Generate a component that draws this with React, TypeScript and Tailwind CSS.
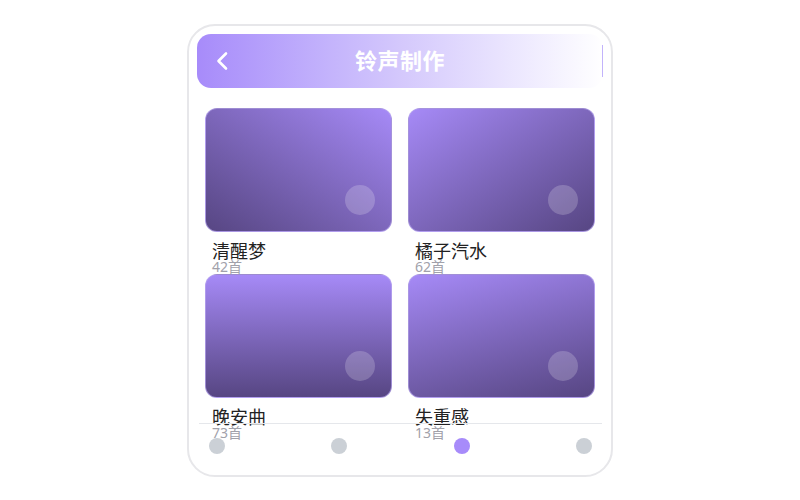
import React from 'react';

const albums = [
  { name: '清醒梦', count: 42, bg: 'bg-linear-to-tr from-[#574683] to-[#a68af7]' },
  { name: '橘子汽水', count: 62, bg: 'bg-linear-to-br from-[#a68af7] to-[#574683]' },
  { name: '晚安曲', count: 73, bg: 'bg-linear-to-b from-[#a68af7] to-[#574683]' },
  { name: '失重感', count: 13, bg: 'bg-linear-165 from-[#a68af7] to-[#574683]' },
];

export default function App() {
  return (
    <main
      className="w-[800px] h-[500px] bg-white flex items-center justify-center"
      style={{ fontFamily: '"Noto Sans", "Noto Sans CJK SC", sans-serif' }}
    >
      <div className="relative w-[426px] h-[453px] rounded-[28px] border-2 border-[#e7e7ea] bg-white overflow-hidden">
        {/* Header */}
        <header className="relative mx-2 mt-2 h-[54px] rounded-[14px] bg-gradient-to-r from-[#a78bfa] via-[#d4c8fc] to-white flex items-center justify-between pl-[18px]">
          <svg width="14" height="20" viewBox="0 0 14 20" fill="none" className="text-white">
            <polyline points="11,2.5 3.5,10 11,17.5" stroke="currentColor" strokeWidth="2.6" strokeLinecap="round" strokeLinejoin="round" />
          </svg>
          <h1 className="absolute inset-0 flex items-center justify-center text-[22px] font-bold text-white tracking-[0.5px]">
            铃声制作
          </h1>
          <div className="w-px h-8 bg-[#c2b3fb]" />
        </header>

        {/* Album grid */}
        <div className="grid grid-cols-2 gap-x-4 px-4 mt-5">
          {albums.map((a) => (
            <div key={a.name} className="flex flex-col">
              <div className={`relative h-[124px] rounded-[12px] border border-[#b9a8f0]/70 ${a.bg}`}>
                <div className="absolute right-4 bottom-4 w-[30px] h-[30px] rounded-full bg-white/20" />
              </div>
              <div className="mt-[10px] pl-[7px] text-[18px] leading-[18px] text-[#222]">{a.name}</div>
              <div className="pl-[7px] text-[14px] leading-[14px] text-[#a1a1aa]">{a.count}首</div>
            </div>
          ))}
        </div>

        {/* Bottom nav */}
        <nav className="absolute left-[10px] right-[9px] bottom-0 border-t border-[#e5e7eb] pt-[14px] pb-[21px] px-[10px] flex justify-between">
          <span className="w-4 h-4 rounded-full bg-[#cbd0d6]" />
          <span className="w-4 h-4 rounded-full bg-[#cbd0d6]" />
          <span className="w-4 h-4 rounded-full bg-[#a78bfa]" />
          <span className="w-4 h-4 rounded-full bg-[#cbd0d6]" />
        </nav>
      </div>
    </main>
  );
}
